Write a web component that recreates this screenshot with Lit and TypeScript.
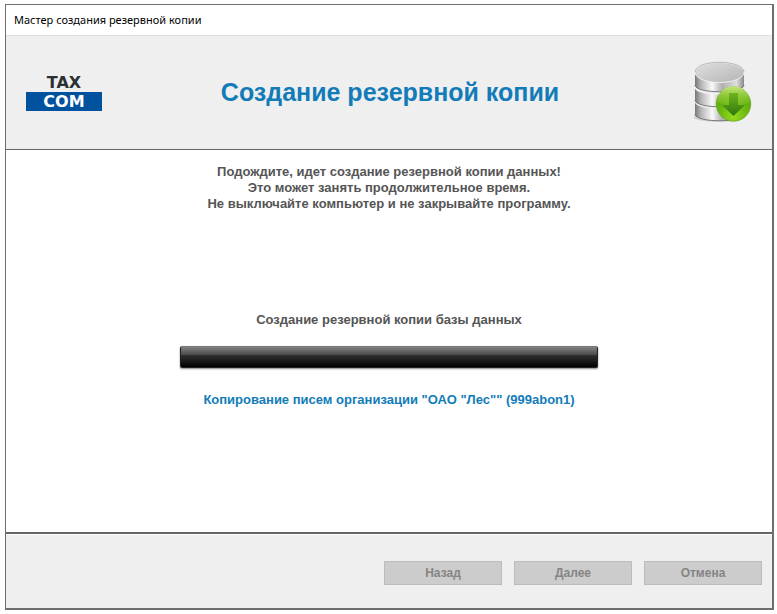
import { LitElement, html, css, svg } from "lit";
import { customElement, property, state } from "lit/decorators.js";

@customElement("brand-logo")
class BrandLogo extends LitElement {
  static styles = css`
    :host { display: block; width: 76px; font: 700 16px/19px "DejaVu Sans", sans-serif; text-align: center; }
    .top { display: block; color: #2b3035; }
    .bottom { display: block; background: #00529f; color: #fff; }
  `;
  render() {
    return html`<span class="top">TAX</span><span class="bottom">COM</span>`;
  }
}

@customElement("database-icon")
class DatabaseIcon extends LitElement {
  static styles = css`
    :host { display: block; }
    svg { display: block; }
  `;
  render() {
    const disc = (y: number) => svg`
      <path d="M1 ${y} v12 C1 ${y + 21} 50 ${y + 21} 50 ${y + 12} v-12 C50 ${y + 9} 1 ${y + 9} 1 ${y} Z" fill="url(#side)"/>
      <path d="M1 ${y + 12} C1 ${y + 21} 50 ${y + 21} 50 ${y + 12}" fill="none" stroke="#777" stroke-width="1"/>`;
    return html`
      <svg width="60" height="64" viewBox="0 0 60 64" aria-hidden="true">
        <defs>
          <linearGradient id="side">
            <stop offset="0" stop-color="#777"/>
            <stop offset=".12" stop-color="#b4b4b4"/>
            <stop offset=".35" stop-color="#fafafa"/>
            <stop offset=".55" stop-color="#b0b0b0"/>
            <stop offset=".85" stop-color="#dedede"/>
            <stop offset="1" stop-color="#888"/>
          </linearGradient>
          <linearGradient id="lid" x1="0" y1="0" x2="1" y2="1">
            <stop offset="0" stop-color="#e0e0e0"/>
            <stop offset="1" stop-color="#b4b4b4"/>
          </linearGradient>
          <radialGradient id="ball" cx=".5" cy=".85" r=".8">
            <stop offset="0" stop-color="#95dc1c"/>
            <stop offset=".5" stop-color="#6cb812"/>
            <stop offset="1" stop-color="#58a010"/>
          </radialGradient>
          <linearGradient id="gloss" x1="0" y1="0" x2="0" y2="1">
            <stop offset="0" stop-color="#d4f088" stop-opacity=".9"/>
            <stop offset="1" stop-color="#a5dc3c" stop-opacity=".1"/>
          </linearGradient>
          <linearGradient id="arrow" x1="0" y1="0" x2="0" y2="1">
            <stop offset="0" stop-color="#6fb31c"/>
            <stop offset="1" stop-color="#2f780c"/>
          </linearGradient>
        </defs>
        <ellipse cx="25" cy="57" rx="26" ry="5" fill="#000" opacity=".12"/>
        ${disc(42)}${disc(28)}
        <path d="M1 13 v12 C1 34 50 34 50 25 V13" fill="url(#side)"/>
        <path d="M1 25 C1 34 50 34 50 25" fill="none" stroke="#777" stroke-width="1"/>
        <ellipse cx="25.5" cy="12.5" rx="24.5" ry="10" fill="url(#lid)" stroke="#f0f0f0"/>
        <path d="M1 12 C2 -1 49 -1 50 12" fill="none" stroke="#aaa" stroke-width=".8"/>
        <circle cx="39.5" cy="44" r="17.3" fill="url(#ball)" stroke="#5a9f16" stroke-width=".6"/>
        <path d="M23 42 C24 21 55 21 56 42 C46 47 33 47 23 42Z" fill="url(#gloss)"/>
        <path d="M35 33 h9 v12 h7 L39.5 56 L28 45 h7 Z" fill="url(#arrow)"/>
      </svg>`;
  }
}

@customElement("app-root")
class AppRoot extends LitElement {
  @property() organization = 'ОАО "Лес"';
  @property() account = "999abon1";
  @state() private buttons = ["Назад", "Далее", "Отмена"];

  static styles = css`
    :host {
      display: flex; box-sizing: border-box; min-height: 100vh; padding: 4px 3px 4px 5px;
      background: #fff; color: #555; font: 700 13px/16px "Liberation Sans", Arial, sans-serif;
    }
    .window {
      flex: 1; display: flex; flex-direction: column;
      border: 1px solid #6e6e6e; border-right-width: 2px; border-bottom-width: 2px;
    }
    .titlebar {
      padding: 0 8px; font: 400 11px/30px "Noto Sans", "Open Sans", sans-serif; color: #000;
      border-bottom: 1px solid #e0e0e0;
    }
    header {
      display: grid; grid-template-columns: 80px 1fr 80px; align-items: center;
      box-sizing: border-box; height: 114px; padding: 0 18px 2px 20px;
      background: #efefef; border-bottom: 1px solid #666;
    }
    h1 { margin: 0; font-size: 25px; line-height: 32px; text-align: center; color: #127cb8; }
    database-icon { justify-self: end; }
    main { flex: 1; padding: 14px 20px; text-align: center; }
    p { margin: 0; }
    .task { display: block; margin-top: 100px; }
    .bar {
      max-width: 418px; height: 22px; margin: 18px auto 24px; border-radius: 2px; box-sizing: border-box;
      border: 1px solid #222; border-top-color: #777;
      background: linear-gradient(#818181, #4b4b4b 38%, #303030 42%, #000);
      box-shadow: 0 1px 2px #888;
    }
    .detail { color: #127cb8; }
    footer {
      display: flex; justify-content: flex-end; gap: 12px; padding: 27px 10px 23px;
      background: #efefef; border-top: 2px solid #666; box-shadow: inset 0 1px #fff;
    }
    button {
      width: 118px; height: 24px; padding: 0; border: 1px solid #bcbcbc; border-radius: 0;
      background: #ccc; color: #858585; font: 700 12px/16px "Liberation Sans", Arial, sans-serif;
    }
  `;

  render() {
    return html`
      <div class="window">
        <div class="titlebar">Мастер создания резервной копии</div>
        <header>
          <brand-logo></brand-logo>
          <h1>Создание резервной копии</h1>
          <database-icon></database-icon>
        </header>
        <main>
          <p>Подождите, идет создание резервной копии данных!</p>
          <p>Это может занять продолжительное время.</p>
          <p>Не выключайте компьютер и не закрывайте программу.</p>
          <span class="task" id="task">Создание резервной копии базы данных</span>
          <div class="bar" role="progressbar" aria-labelledby="task"></div>
          <p class="detail">Копирование писем организации "${this.organization}" (${this.account})</p>
        </main>
        <footer>
          ${this.buttons.map((label) => html`<button type="button" disabled>${label}</button>`)}
        </footer>
      </div>`;
  }
}
